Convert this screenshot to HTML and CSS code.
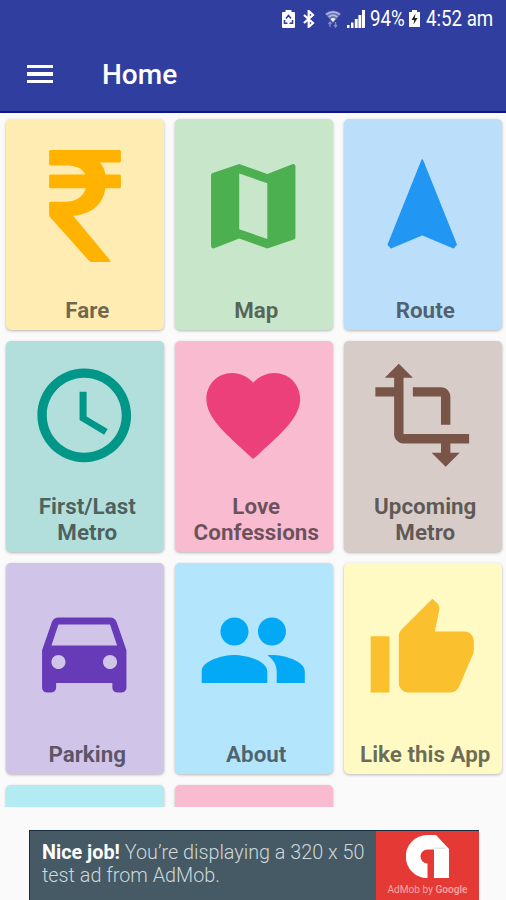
FILE: index.html
```html
<!DOCTYPE html>
<html lang="en">
    <head>
        <meta charset="UTF-8" />
        <meta name="viewport" content="width=device-width, initial-scale=1.0" />
        <title>Home</title>
        <link rel="stylesheet" href="styles.css">
    </head>
    <body>
        <header class="app-bar">
            <div class="status-bar">
                <svg class="status-saver" viewBox="0 0 13 18">
                    <path fill="#fff" d="M3.500 0h6v2H12a1 1 0 0 1 1 1v14a1 1 0 0 1-1 1H1a1 1 0 0 1-1-1V3a1 1 0 0 1 1-1h2.500z" />
                    <path fill="none" stroke="#303f9f" stroke-width="1.600" d="M4 8.500l2.500-3L9 8.500M2.500 10v3.300h3M10.500 10v3.300h-3" />
                </svg>
                <svg class="status-bluetooth" viewBox="0 0 12 18">
                    <path fill="none" stroke="#fff" stroke-width="2.200" d="M1 5l9 8-4.300 4V1L10 5l-9 8" />
                </svg>
                <svg class="status-wifi" viewBox="0 0 16 18">
                    <path fill="#fff" opacity="0.3" d="M0 3.500Q8-2.500 16 3.500L8 13z" />
                    <path fill="none" stroke="#fff" stroke-width="1.300" opacity="0.5" d="M1 4.500q7-5 14 0M3.500 7q4.500-3.500 9 0" />
                    <path fill="#fff" opacity="0.9" d="M5.500 9q2.500-2 5 0L8 12z" />
                    <path fill="none" stroke="#fff" stroke-width="1.300" opacity="0.4" d="M5 17v-5M3.500 14L5 12l1.500 2M10.500 12v5M9 15l1.500 2 1.500-2" />
                </svg>
                <svg class="status-signal" viewBox="0 0 18 18">
                    <path fill="#fff" d="M0 15h2.500v3H0zM4 12.500h2.500V18H4zM7.800 9h2.900v9H7.800zM11.400 5h2.900v13h-2.900zM15 0h3v18h-3z" />
                </svg>
                <span class="status-percent"><span>94%</span></span>
                <svg class="status-battery" viewBox="0 0 11 17">
                    <path fill="#fff" d="M3 0h5v2h3v15H0V2h3z" />
                    <path fill="#222" d="M6.500 3.500L2.500 10h2.700L4.500 14.500l4-6.500H5.800z" />
                </svg>
                <span class="status-time"><span>4:52 am</span></span>
            </div>
            <div class="toolbar">
                <div class="menu-icon">
                    <span></span>
                    <span></span>
                    <span></span>
                </div>
                <h1>Home</h1>
            </div>
        </header>

        <main class="grid">
            <div class="card fare">
                <div class="card-icon">
                    <svg viewBox="0 0 112 112">
                        <path d="M21.500 0H91q1.500 0 1.500 1.500V11q0 1.500-1.500 1.500H71.500Q76 17 77 24.500H91q1.500 0 1.500 1.500V36.500q0 1.500-1.500 1.500H77C75 54 64 63.500 45 65.500L81.500 109.500Q83 112 80 112H64Q62.500 112 61 110.500L22.500 67.500Q21 66 21 64V53q0-1.500 1.500-1.500H36C47 51.500 55 47 57.500 38H22.500Q21 38 21 36.500V26q0-1.500 1.500-1.500H57C54 18 47 15.500 38 15.500H22.500Q21 15.500 21 14V1.500Q21 0 22.500 0z" />
                    </svg>
                </div>
                <div class="card-label">Fare</div>
            </div>
            <div class="card map">
                <div class="card-icon">
                    <svg viewBox="0 0 24 24">
                        <path d="M20.500 3l-.16.03L15 5.100 9 3 3.360 4.900c-.21.070-.36.250-.36.480V20.500c0 .28.220.5.5.5l.16-.03L9 18.900l6 2.100 5.640-1.900c.21-.07.360-.25.360-.48V3.500c0-.28-.22-.5-.5-.5zM15 19l-6-2.110V5l6 2.110V19z" />
                    </svg>
                </div>
                <div class="card-label">Map</div>
            </div>
            <div class="card route">
                <div class="card-icon">
                    <svg viewBox="0 0 24 24">
                        <path d="M12 2.200L4.800 20.200l.6.600L12 18l6.600 2.800.6-.6z" />
                    </svg>
                </div>
                <div class="card-label">Route</div>
            </div>
            <div class="card timing">
                <div class="card-icon">
                    <svg viewBox="0 0 24 24">
                        <path d="M11.990 2C6.470 2 2 6.480 2 12s4.470 10 9.990 10C17.520 22 22 17.520 22 12S17.520 2 11.990 2zM12 20c-4.420 0-8-3.580-8-8s3.580-8 8-8 8 3.580 8 8-3.580 8-8 8zm.5-13H11v6l5.250 3.150.75-1.230-4.500-2.670z" />
                    </svg>
                </div>
                <div class="card-label">First/Last<br>Metro</div>
            </div>
            <div class="card love">
                <div class="card-icon">
                    <svg viewBox="0 0 24 24">
                        <path d="M12 21.350l-1.450-1.320C5.400 15.360 2 12.280 2 8.500 2 5.420 4.420 3 7.500 3c1.740 0 3.410.81 4.500 2.090C13.090 3.810 14.760 3 16.500 3 19.580 3 22 5.420 22 8.500c0 3.780-3.400 6.860-8.550 11.540L12 21.350z" />
                    </svg>
                </div>
                <div class="card-label">Love<br>Confessions</div>
            </div>
            <div class="card upcoming">
                <div class="card-icon">
                    <svg viewBox="0 0 24 24">
                        <path d="M22 18v-2H8V4h2L7 1 4 4h2v2H2v2h4v8c0 1.100.9 2 2 2h8v2h-2l3 3 3-3h-2v-2h4zM10 8h6v6h2V8c0-1.100-.9-2-2-2h-6v2z" />
                    </svg>
                </div>
                <div class="card-label">Upcoming<br>Metro</div>
            </div>
            <div class="card parking">
                <div class="card-icon">
                    <svg viewBox="0 0 24 24">
                        <path d="M18.920 6.010C18.720 5.420 18.160 5 17.500 5h-11c-.66 0-1.210.42-1.420 1.010L3 12v8c0 .55.450 1 1 1h1c.55 0 1-.45 1-1v-1h12v1c0 .55.450 1 1 1h1c.55 0 1-.45 1-1v-8l-2.080-5.990zM6.500 16c-.83 0-1.500-.67-1.500-1.500S5.670 13 6.500 13s1.500.67 1.500 1.500S7.330 16 6.500 16zm11 0c-.83 0-1.500-.67-1.500-1.500s.67-1.500 1.500-1.500 1.500.67 1.500 1.500-.67 1.500-1.500 1.500zM5 11l1.500-4.500h11L19 11H5z" />
                    </svg>
                </div>
                <div class="card-label">Parking</div>
            </div>
            <div class="card about">
                <div class="card-icon">
                    <svg viewBox="0 0 24 24">
                        <path d="M16 11c1.660 0 2.990-1.340 2.990-3S17.660 5 16 5c-1.660 0-3 1.340-3 3s1.340 3 3 3zm-8 0c1.660 0 2.990-1.340 2.990-3S9.660 5 8 5C6.340 5 5 6.340 5 8s1.340 3 3 3zm0 2c-2.330 0-7 1.170-7 3.500V19h14v-2.500c0-2.330-4.670-3.500-7-3.500zm8 0c-.29 0-.62.020-.97.050 1.160.84 1.970 1.970 1.970 3.450V19h6v-2.500c0-2.330-4.670-3.500-7-3.500z" />
                    </svg>
                </div>
                <div class="card-label">About</div>
            </div>
            <div class="card like">
                <div class="card-icon">
                    <svg viewBox="0 0 24 24">
                        <path d="M1 21h4V9H1v12zm22-11c0-1.100-.9-2-2-2h-6.310l.95-4.570.03-.32c0-.41-.17-.79-.44-1.060L14.170 1 7.590 7.590C7.220 7.950 7 8.450 7 9v10c0 1.100.9 2 2 2h9c.83 0 1.540-.5 1.840-1.220l3.020-7.050c.09-.23.140-.47.140-.73v-2z" />
                    </svg>
                </div>
                <div class="card-label">Like this App</div>
            </div>
            <div class="card more-cyan"></div>
            <div class="card more-pink"></div>
        </main>

        <footer class="ad">
            <p class="ad-text"><b>Nice job!</b> You’re displaying a 320 x 50<br>test ad from AdMob.</p>
            <div class="ad-brand">
                <svg viewBox="0 0 43 43">
                    <path fill="#fff" d="M21 0h9l13 14v29H28V14.500h-6.500A7 7 0 0 0 21.500 28.500V43A21.500 21.500 0 0 1 21 0z" />
                    <path fill="#e4e4e4" d="M28 14h12l-1.500-1.500H28z" />
                </svg>
                <span>AdMob by <b>Google</b></span>
            </div>
        </footer>
    </body>
</html>
```
FILE: styles.css
```css
* {
    box-sizing: border-box;
}

body {
    font-family: Roboto, sans-serif;
    margin: 0;
    height: 900px;
    background-color: #fafafa;
    display: flex;
    flex-direction: column;
    overflow: hidden;
}

.app-bar {
    height: 113px;
    flex: none;
    background: #303f9f;
    border-bottom: 2px solid #10158a;
    color: #fff;
}

.status-bar {
    height: 37px;
    display: flex;
    align-items: center;
    padding-left: 282px;
}

.status-bar svg {
    flex: none;
}

.status-saver {
    width: 13px;
    height: 18px;
}

.status-bluetooth {
    width: 12px;
    height: 18px;
    margin-left: 8px;
}

.status-wifi {
    width: 16px;
    height: 18px;
    margin-left: 10px;
}

.status-signal {
    width: 18px;
    height: 18px;
    margin-left: 6px;
}

.status-percent,
.status-time {
    font-size: 22px;
    line-height: 37px;
    white-space: nowrap;
}

.status-percent span,
.status-time span {
    display: inline-block;
    transform: scaleX(0.85);
    transform-origin: left;
}

.status-percent {
    width: 34px;
    margin-left: 5px;
}

.status-battery {
    width: 11px;
    height: 17px;
    margin-left: 5px;
}

.status-time {
    margin-left: 6px;
}

.toolbar {
    height: 74px;
    display: flex;
    align-items: center;
    padding-left: 27px;
}

.menu-icon {
    width: 26px;
    display: flex;
    flex-direction: column;
    gap: 4px;
}

.menu-icon span {
    height: 3.5px;
    background: #fff;
}

h1 {
    margin: 0 0 0 49px;
    font-size: 28px;
    font-weight: 500;
}

.grid {
    height: 694px;
    flex: none;
    display: grid;
    grid-template-columns: repeat(3, 158px);
    grid-auto-rows: 211px;
    gap: 11px;
    padding: 5.5px 0 0 5.5px;
    overflow: hidden;
}

.card {
    display: flex;
    flex-direction: column;
    border-radius: 5px;
    box-shadow: 0 1px 3px rgba(0, 0, 0, 0.28);
}

.card-icon {
    flex: 1;
    display: flex;
    align-items: center;
    justify-content: center;
}

.card-icon svg {
    width: 112.5px;
    height: 112.5px;
    margin-bottom: 3px;
    fill: currentColor;
}

.card-label {
    padding: 0 0 7px 5.5px;
    font-size: 22.4px;
    font-weight: 700;
    line-height: 26px;
    text-align: center;
    white-space: nowrap;
    color: rgba(0, 0, 0, 0.57);
}

.fare {
    background: #ffecb3;
    color: #ffb300;
}

.map {
    background: #c8e6c9;
    color: #4caf50;
}

.route {
    background: #bbdefb;
    color: #2196f3;
}

.route path {
    stroke: currentColor;
    stroke-width: 0.4;
    stroke-linejoin: round;
}

.timing {
    background: #b2dfdb;
    color: #009688;
}

.love {
    background: #f8bbd0;
    color: #ec407a;
}

.upcoming {
    background: #d7ccc8;
    color: #795548;
}

.parking {
    background: #d1c4e9;
    color: #673ab7;
}

.about {
    background: #b3e5fc;
    color: #03a9f4;
}

.like {
    background: #fff9c4;
    color: #fbc02d;
}

.more-cyan {
    background: #b2ebf2;
}

.more-pink {
    background: #f8bbd0;
}

.ad {
    width: 450px;
    height: 70px;
    flex: none;
    margin: 23px 0 0 29px;
    display: flex;
    background: #455a64;
    border-top: 1px solid #12303f;
    border-left: 1px solid #12303f;
}

.ad-text {
    flex: 1;
    margin: 0;
    padding: 10px 0 0 12px;
    font-size: 19.8px;
    font-weight: 300;
    line-height: 23px;
    white-space: nowrap;
    color: #cfd8dc;
}

.ad-text b {
    font-weight: 700;
    color: #fff;
}

.ad-brand {
    width: 103px;
    display: flex;
    flex-direction: column;
    align-items: center;
    background: #e53935;
}

.ad-brand svg {
    width: 43px;
    height: 43px;
    margin-top: 4px;
}

.ad-brand span {
    margin-top: 5px;
    font-size: 10.1px;
    line-height: 14px;
    white-space: nowrap;
    color: #f5a9a7;
}

.ad-brand b {
    font-weight: 500;
}
```
